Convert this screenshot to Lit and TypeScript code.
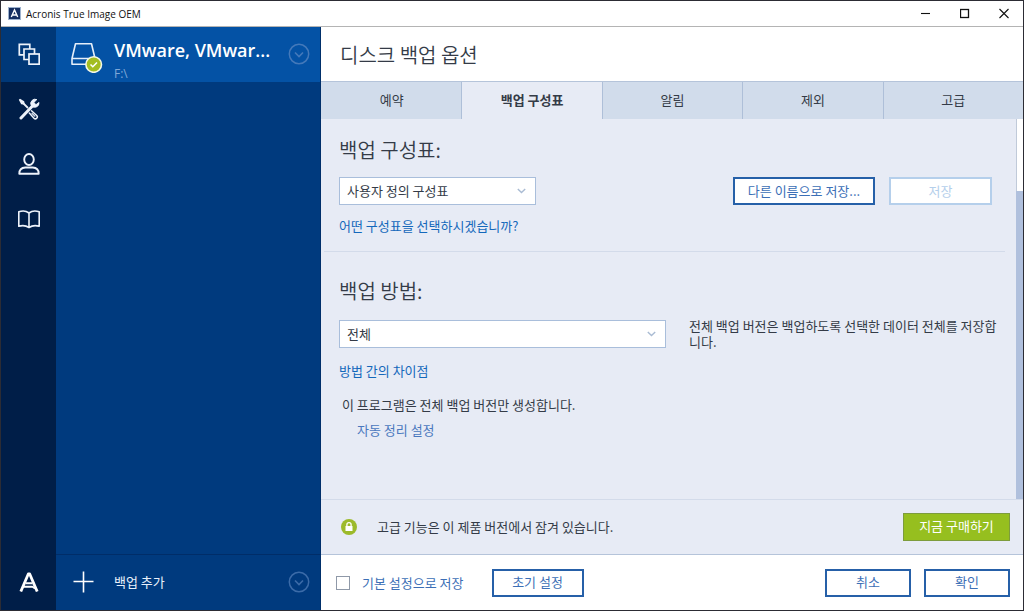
import { LitElement, html, css, svg } from "lit";
import { customElement, state } from "lit/decorators.js";
import { classMap } from "lit/directives/class-map.js";

const chevronCircle = html`<svg width="22" height="22" viewBox="0 0 22 22" fill="none" stroke="currentColor" aria-hidden="true">
  <circle cx="11" cy="11" r="9.7" stroke-width="1.5" />
  <path d="M7 9.5l4 4 4-4" stroke-width="1.6" />
</svg>`;

const railIcons = [
  {
    label: "백업",
    art: svg`<path d="M6 11.800H1.300V1.300h10.500V6M11 16.500H6V6h10.500v5" stroke-width="1.700"/><rect x="11" y="11" width="10.200" height="10.200" stroke-width="1.700"/>`,
  },
  {
    label: "도구",
    art: svg`<path d="M.8 1.800L2 .8l4.200 2.400 .4 2.400-1 1-2.400-.4z" fill="currentColor" stroke="none"/>
      <path d="M5 5l5 5" stroke-width="1.800"/>
      <path d="M13.500 12.800l5.200 4.700a1.900 1.900 0 0 1-2.700 2.700l-4.700-5.200" stroke-width="1.500" stroke-linecap="round"/>
      <path d="M14 15.300l2.800 2.900" stroke-width="1.200" stroke-linecap="round"/>
      <path d="M3 20L14.500 8" stroke-width="3" stroke-linecap="round"/>
      <path d="M18.800 1.600a4.300 4.300 0 0 0-5.600 5.800 4.300 4.300 0 0 0 7.800-2.900l-3 2.200-2.200-2.200z" fill="currentColor" stroke-width="1" stroke-linejoin="round"/>`,
  },
  {
    label: "계정",
    art: svg`<ellipse cx="11" cy="6.500" rx="4.800" ry="5.500" stroke-width="1.900"/><path d="M1.300 20.700c0-4.200 2.200-6 6-6.200h7.400c3.800.2 6 2 6 6.200z" stroke-width="1.900" stroke-linejoin="round"/>`,
  },
  {
    label: "도움말",
    art: svg`<path d="M11 5v14M.8 3.800c3.600-1.300 7.400-1 10.200 1.200 2.800-2.200 6.600-2.500 10.200-1.200v14.400c-3.600-.9-7.400-.6-10.200 1.300-2.800-1.900-6.600-2.200-10.200-1.300z" stroke-width="1.600" stroke-linejoin="round"/>`,
  },
];

@customElement("title-bar")
class TitleBar extends LitElement {
  static styles = css`
    :host { display: flex; align-items: center; height: 25px; flex: none; background: #fff; border-bottom: 1px solid #b4b4b4; color: #111; }
    .logo { margin: 0 5px 0 7px; }
    .name { flex: 1; font: 10px "Open Sans", "Noto Sans", sans-serif; }
    .win { width: 39px; height: 25px; padding: 0; border: 0; background: none; color: #111; display: grid; place-items: center; }
  `;
  render() {
    const parts = [
      ["최소화", svg`<path d="M0 5.500h9"/>`],
      ["최대화", svg`<rect x=".5" y="1.500" width="8" height="8" stroke-width="1.300"/>`],
      ["닫기", svg`<path d="M.5 1l9 9M9.500 1l-9 9"/>`],
    ];
    return html`
      <svg class="logo" width="13" height="13" viewBox="0 0 13 13" aria-hidden="true">
        <rect x=".5" y=".5" width="12" height="12" fill="#162f61" stroke="#9db2cf" />
        <path d="M3.300 10l3.200-7 3.200 7M4.500 8h4" fill="none" stroke="#fff" stroke-width="1.400" />
      </svg>
      <span class="name">Acronis True Image OEM</span>
      ${parts.map(
        ([label, art]) => html`<button class="win" aria-label=${label}>
          <svg width="10" height="11" viewBox="0 0 10 11" fill="none" stroke="currentColor" stroke-width="1.100">${art}</svg>
        </button>`
      )}
    `;
  }
}

@customElement("nav-rail")
class NavRail extends LitElement {
  static styles = css`
    :host { display: flex; flex-direction: column; width: 55px; flex: none; background: #001e48; color: #fff; }
    .item { height: 55px; padding: 0 0 2px; border: 0; background: none; color: #edf3fb; display: grid; place-items: center; }
    .active { background: #003878; }
    .brand { margin-top: auto; }
  `;
  render() {
    return html`
      ${railIcons.map(
        (icon, i) => html`<button class=${classMap({ item: true, active: i === 0 })} aria-label=${icon.label}>
          <svg width="22" height="22" viewBox="0 0 22 22" fill="none" stroke="currentColor">${icon.art}</svg>
        </button>`
      )}
      <button class="item brand" aria-label="Acronis">
        <svg width="20" height="20" viewBox="0 0 20 20" fill="none" stroke="#fff" stroke-width="2.800" stroke-linejoin="round">
          <path d="M1.800 19.500L9.300 2h1.400L18.200 19.500" />
          <path d="M6.500 11.300h7M4 14.800h9.500l2.500 1.700" stroke-width="1.900" />
        </svg>
      </button>
    `;
  }
}

@customElement("backup-list")
class BackupList extends LitElement {
  static styles = css`
    :host { display: flex; flex-direction: column; width: 264px; flex: none; background: #003a7e; border-right: 1px solid #002f6a; color: #fff; }
    .row { display: flex; align-items: center; height: 55px; padding: 0 10px 2px 0; box-sizing: border-box; }
    .selected { background: #0452a5; }
    .glyph { width: 34px; margin: 0 11px 0 13px; flex: none; display: grid; place-items: center; }
    .glyph.plus { padding-left: 4px; place-items: center start; box-sizing: border-box; }
    .text { flex: 1; min-width: 0; padding-top: 12px; }
    .name { font: 600 18px/24px "Open Sans", "Noto Sans", sans-serif; white-space: nowrap; }
    .path { font: 12px/14px "Open Sans", "Noto Sans", sans-serif; color: #7fa9d8; margin-top: 5px; }
    .more { border: 0; padding: 0; background: none; color: #4479ba; display: grid; }
    .add { margin-top: auto; height: 56px; border-top: 1px solid #002d68; }
    .add .more { color: #3b6ba8; }
    .new { flex: 1; display: flex; align-items: center; border: 0; padding: 0; background: none; color: #e8f0fa; text-align: left; font: 13px/18px "Noto Sans CJK KR", sans-serif; }
  `;
  render() {
    return html`
      <div class="row selected">
        <svg class="glyph" width="34" height="38" viewBox="0 0 34 38" fill="none" aria-hidden="true">
          <path d="M6.500 8.800h16l3.500 14.700v5.700H3v-5.700zM3 23.500h23" stroke="#e6effa" stroke-width="1.600" stroke-linejoin="round" />
          <circle cx="24.700" cy="29.500" r="7.800" fill="#a3bd22" stroke="#f4f7e6" stroke-width="1.600" />
          <path d="M21.500 29.500l2.300 2.300 4.200-4.400" stroke="#fff" stroke-width="1.500" />
        </svg>
        <div class="text">
          <div class="name">VMware, VMwar...</div>
          <div class="path">F:\\</div>
        </div>
        <button class="more" aria-label="작업">${chevronCircle}</button>
      </div>
      <div class="row add">
        <button class="new">
          <span class="glyph plus"
            ><svg width="22" height="22" viewBox="0 0 22 22" stroke="#fff" stroke-width="1.600" aria-hidden="true"><path d="M10.500 .5v21M.5 10.500h20" /></svg></span
          >백업 추가
        </button>
        <button class="more" aria-label="추가 옵션">${chevronCircle}</button>
      </div>
    `;
  }
}

@customElement("drop-down")
class DropDown extends LitElement {
  static properties = { label: {}, value: {} };
  label = "";
  value = "";
  static styles = css`
    :host { display: grid; align-items: center; }
    .select { grid-area: 1 / 1; appearance: none; height: 28px; width: 100%; box-sizing: border-box; margin: 0; padding: 0 28px 2px 7px; border: 1px solid #a9bedb; border-radius: 0; background: #fff; color: #343b47; font: 13px "Noto Sans CJK KR", sans-serif; }
    .arrow { grid-area: 1 / 1; justify-self: end; margin-right: 10px; pointer-events: none; }
  `;
  render() {
    return html`
      <select class="select" aria-label=${this.label}><option>${this.value}</option></select>
      <svg class="arrow" width="9" height="6" viewBox="0 0 9 6" fill="none" stroke="#a9bbd3" stroke-width="1.400" aria-hidden="true"><path d="M.8 1l3.700 3.500L8.200 1" /></svg>
    `;
  }
}

@customElement("backup-options")
class BackupOptions extends LitElement {
  @state() tab = 1;
  static styles = css`
    :host { display: flex; flex-direction: column; flex: 1; min-width: 0; background: #fff; color: #343b47; font: 13px/16px "Noto Sans CJK KR", sans-serif; }
    .title { margin: 0; padding: 0 19px; height: 54px; font-size: 20px; line-height: 56px; font-weight: 350; flex: none; }
    .tabs { display: grid; grid-template-columns: repeat(5, 1fr); height: 38px; flex: none; border-top: 1px solid #b5c4da; box-sizing: border-box; }
    .tab { border: 0; border-left: 1px solid #aebfd8; padding: 0 0 1px; background: #d1dceb; color: #343b47; font: inherit; }
    .tab:first-child { border-left-color: #d1dceb; }
    .tab.active { background: #e7ebf5; font-weight: 700; }
    .body { flex: 1; display: flex; min-height: 0; background: #e7ebf5; }
    .content { flex: 1; min-width: 0; padding: 0 11px 0 3px; }
    .section { padding: 16px 13px 17px 15px; }
    .section + .section { border-top: 1px solid #d3dbea; padding-top: 24px; }
    .heading { margin: 0 0 12px; font-size: 20px; line-height: 30px; font-weight: 350; }
    .row { display: flex; align-items: center; gap: 14px; }
    .scheme { width: 197px; margin-right: auto; }
    .split { display: grid; grid-template-columns: 327px 1fr; column-gap: 23px; margin-right: -13px; }
    .desc { margin: 0; line-height: 16px; }
    .link { display: table; margin-top: 13px; line-height: 16px; color: #1468bb; text-decoration: none; }
    .note { margin: 18px 0 0 3px; }
    .sub { margin: 9px 0 0 18px; color: #4a78be; }
    .btn { height: 28px; padding: 0 0 2px; box-sizing: border-box; border: 2px solid #2660a8; border-radius: 0; background: #fff; color: #3c6fb6; font: 13px "Noto Sans CJK KR", sans-serif; }
    .save-as { width: 142px; }
    .save { width: 103px; border-color: #b5cfeb; color: #b5cfeb; }
    .cmd { width: 86px; }
    .reset { width: 92px; }
    .buy { width: 107px; border: 1px solid #7d9c3c; background: #96bf1f; color: #fff; }
    .scroll { width: 6px; border-left: 1px solid #c0cad9; background: #fff; display: flex; flex-direction: column; justify-content: flex-end; }
    .thumb { height: 81%; margin-left: -1px; background: #b0c0dd; }
    .locked { display: flex; align-items: center; height: 54px; padding: 0 13px 1px 20px; flex: none; background: #e7ebf5; border-top: 1px solid #d3dbea; border-bottom: 1px solid #b5c4da; box-sizing: content-box; height: 53px; }
    .locked-text { flex: 1; margin-left: 20px; }
    .footer { display: flex; align-items: center; height: 55px; flex: none; padding: 0 13px; }
    .check { appearance: none; width: 14px; height: 14px; margin: 0 12px 0 2px; border: 1px solid #8f99a8; background: #fff; }
    .check:checked { background: #3c6fb6; }
    .check-label { color: #3c6fb6; margin-right: 28px; }
    .cancel { margin: 0 13px 0 auto; }
  `;
  render() {
    const tabs = ["예약", "백업 구성표", "알림", "제외", "고급"];
    return html`
      <h1 class="title">디스크 백업 옵션</h1>
      <div class="tabs" role="tablist">
        ${tabs.map(
          (name, i) => html`<button role="tab" aria-selected=${i === this.tab} class=${classMap({ tab: true, active: i === this.tab })} @click=${() => (this.tab = i)}>${name}</button>`
        )}
      </div>
      <div class="body">
        <div class="content">
          <section class="section">
            <h2 class="heading">백업 구성표:</h2>
            <div class="row">
              <drop-down class="scheme" label="백업 구성표" value="사용자 정의 구성표"></drop-down>
              <button class="btn save-as">다른 이름으로 저장...</button>
              <button class="btn save" disabled>저장</button>
            </div>
            <a class="link" href="#scheme">어떤 구성표을 선택하시겠습니까?</a>
          </section>
          <section class="section">
            <h2 class="heading">백업 방법:</h2>
            <div class="split">
              <drop-down label="백업 방법" value="전체"></drop-down>
              <p class="desc">전체 백업 버전은 백업하도록 선택한 데이터 전체를 저장합니다.</p>
            </div>
            <a class="link" href="#method">방법 간의 차이점</a>
            <p class="note">이 프로그램은 전체 백업 버전만 생성합니다.</p>
            <a class="link sub" href="#cleanup">자동 정리 설정</a>
          </section>
        </div>
        <div class="scroll"><div class="thumb"></div></div>
      </div>
      <div class="locked">
        <svg width="16" height="16" viewBox="0 0 16 16" aria-hidden="true">
          <circle cx="8" cy="8" r="8" fill="#9cba2b" />
          <rect x="4.500" y="7" width="7" height="5" fill="#fff" />
          <path d="M5.900 7V5.700a2.100 2.100 0 0 1 4.200 0V7" fill="none" stroke="#fff" stroke-width="1.300" />
        </svg>
        <span class="locked-text">고급 기능은 이 제품 버전에서 잠겨 있습니다.</span>
        <button class="btn buy">지금 구매하기</button>
      </div>
      <div class="footer">
        <input class="check" id="default" type="checkbox" />
        <label class="check-label" for="default">기본 설정으로 저장</label>
        <button class="btn reset">초기 설정</button>
        <button class="btn cmd cancel">취소</button>
        <button class="btn cmd">확인</button>
      </div>
    `;
  }
}

@customElement("app-root")
class AppRoot extends LitElement {
  static styles = css`
    :host { display: flex; flex-direction: column; height: 100vh; box-sizing: border-box; border: 1px solid #2c2c34; }
    .main { flex: 1; display: flex; min-height: 0; }
  `;
  render() {
    return html`
      <title-bar></title-bar>
      <div class="main">
        <nav-rail></nav-rail>
        <backup-list></backup-list>
        <backup-options></backup-options>
      </div>
    `;
  }
}
